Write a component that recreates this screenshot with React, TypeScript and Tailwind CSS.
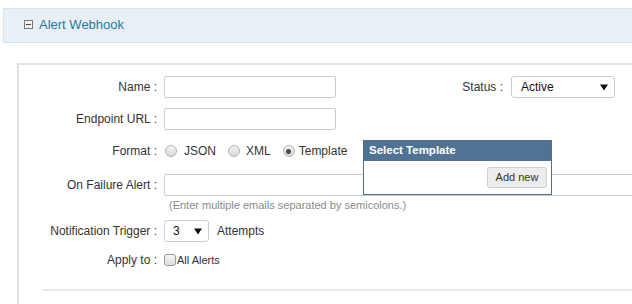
import type { ReactNode } from "react";

function Label({ children }: { children: ReactNode }) {
  return <div className="w-[138px] shrink-0 text-right text-[12px] text-[#333]">{children}</div>;
}

function Radio({ checked = false }: { checked?: boolean }) {
  return (
    <span className="flex h-[12px] w-[12px] shrink-0 items-center justify-center rounded-full border border-[#b2b2b2] bg-gradient-to-b from-[#f4f4f4] to-[#d9d9d9]">
      {checked && <span className="h-[5px] w-[5px] rounded-full bg-[#4a4a4a]" />}
    </span>
  );
}

function Caret() {
  return (
    <svg width="8" height="7" viewBox="0 0 8 7" aria-hidden="true">
      <path d="M0 0.5 H8 L4 6.5 Z" fill="#111" />
    </svg>
  );
}

export default function App() {
  return (
    <div className="h-[304px] w-[632px] overflow-hidden bg-white pt-[8px] font-['Liberation_Sans',Arial,sans-serif]">
      {/* panel header */}
      <div className="ml-[3px] flex h-[35px] w-[700px] items-center border border-[#d3e3ef] bg-[#e8eff5] pb-[2px] pl-[20px]">
        <span className="flex h-[9px] w-[9px] items-center justify-center border border-[#7a7a7a] bg-[#f4f4f4]">
          <span className="h-px w-[5px] bg-[#444]" />
        </span>
        <span className="ml-[6px] text-[13px] text-[#1d7ba3]">Alert Webhook</span>
      </div>

      {/* form box */}
      <div className="ml-[17px] mt-[20px] w-[700px] border-l-2 border-t-2 border-[#e3e3e3] pt-[11px]">
        <div className="flex h-[22px] items-center">
          <Label>Name :</Label>
          <div className="ml-[7px] h-[22px] w-[172px] rounded-[2px] border border-[#ccc]" />
          <div className="w-[167px] text-right text-[12px] text-[#333]">Status :</div>
          <div className="ml-[8px] flex h-[22px] w-[104px] items-center justify-between rounded-[3px] border border-[#ccc] pl-[9px] pr-[6px] text-[12px] text-[#111]">
            <span>Active</span>
            <Caret />
          </div>
        </div>

        <div className="mt-[10px] flex h-[22px] items-center">
          <Label>Endpoint URL :</Label>
          <div className="ml-[7px] h-[22px] w-[172px] rounded-[2px] border border-[#ccc]" />
        </div>

        <div className="relative mt-[10px] flex h-[22px] items-center text-[12px] text-[#333]">
          <Label>Format :</Label>
          <span className="ml-[8px]">
            <Radio />
          </span>
          <span className="ml-[7px]">JSON</span>
          <span className="ml-[12px]">
            <Radio />
          </span>
          <span className="ml-[6px]">XML</span>
          <span className="ml-[12px]">
            <Radio checked />
          </span>
          <span className="ml-[4px]">Template</span>

          {/* template dropdown */}
          <div className="absolute left-[344px] top-0 z-10 flex h-[55px] w-[189px] flex-col border border-[#4e6e8d] bg-white">
            <div className="flex h-[20px] items-center bg-[#507394] pl-[5px] text-[11.5px] font-bold text-white">
              Select Template
            </div>
            <div className="flex justify-end pr-[4px] pt-[6px]">
              <button className="h-[21px] w-[60px] rounded-[3px] border border-[#cfcfcf] bg-[#ededed] text-[11px] text-[#333]">
                Add new
              </button>
            </div>
          </div>
        </div>

        <div className="mt-[12px] flex h-[22px] items-center">
          <Label>On Failure Alert :</Label>
          <div className="ml-[7px] h-[22px] flex-1 rounded-[2px] border border-[#ccc]" />
        </div>
        <div className="ml-[150px] mt-[3px] h-[13px] text-[11px] leading-[13px] text-[#8a8a8a]">
          (Enter multiple emails separated by semicolons.)
        </div>

        <div className="mt-[8px] flex h-[22px] items-center">
          <Label>Notification Trigger :</Label>
          <div className="ml-[7px] flex h-[22px] w-[45px] items-center justify-between rounded-[3px] border border-[#ccc] pl-[8px] pr-[6px] text-[12px] text-[#111]">
            <span>3</span>
            <Caret />
          </div>
          <span className="ml-[8px] text-[12px] text-[#333]">Attempts</span>
        </div>

        <div className="mt-[7px] flex h-[22px] items-center">
          <Label>Apply to :</Label>
          <span className="ml-[7px] h-[12px] w-[12px] rounded-[3px] border border-[#9a9a9a] bg-gradient-to-b from-[#f6f6f6] to-[#dcdcdc]" />
          <span className="ml-px text-[11px] text-[#333]">All Alerts</span>
        </div>

        <div className="ml-[23px] mt-[18px] h-[2px] bg-[#ebebeb]" />
        <div className="h-[20px]" />
      </div>
    </div>
  );
}
